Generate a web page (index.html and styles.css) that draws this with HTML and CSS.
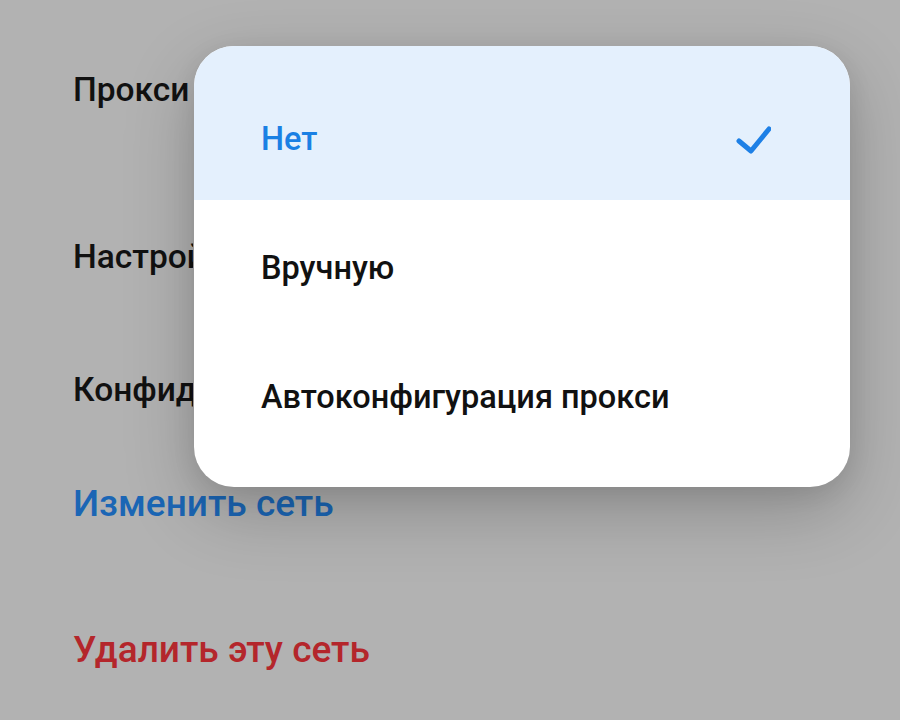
FILE: index.html
```html
<!DOCTYPE html>
<html lang="ru">
<head>
<meta charset="utf-8">
<link rel="stylesheet" href="styles.css">
</head>
<body>
<div class="screen">
  <div class="settings">
    <div class="item item-proxy">Прокси</div>
    <div class="item item-setup clipped">Настройки IP</div>
    <div class="item item-privacy clipped">Конфиденциальность</div>
    <div class="item action action-edit">Изменить сеть</div>
    <div class="item action action-delete">Удалить эту сеть</div>
  </div>
  <div class="menu">
    <div class="option option-selected">
      <span class="label">Нет</span>
      <svg class="check" width="36" height="30" viewBox="0 0 36 30"><path d="M4 17 L16 27 L34 5" fill="none" stroke="#1e80e6" stroke-width="5" stroke-linecap="round" stroke-linejoin="round"/></svg>
    </div>
    <div class="option option-mid"><span class="label">Вручную</span></div>
    <div class="option option-last"><span class="label">Автоконфигурация прокси</span></div>
  </div>
</div>
</body>
</html>
```
FILE: styles.css
```css
html, body {
  margin: 0;
  padding: 0;
}
body {
  background: #b2b2b2;
  font-family: Roboto, "Noto Sans", "Liberation Sans", sans-serif;
}
.screen {
  position: relative;
  width: 900px;
  height: 720px;
  overflow: hidden;
}
.settings {
  display: flex;
  flex-direction: column;
  align-items: flex-start;
  padding: 0 0 0 73px;
}
.item {
  font-size: 33.5px;
  font-weight: 500;
  color: #111;
  line-height: 40px;
  white-space: nowrap;
}
.clipped {
  max-width: 120px;
  overflow: hidden;
}
.item-proxy { margin-top: 70px; }
.item-setup { margin-top: 127px; }
.item-privacy { margin-top: 93px; }
.action { font-size: 37px; line-height: 44px; }
.action-edit { margin-top: 72px; color: #1b66b5; }
.action-delete { margin-top: 102px; color: #b4262b; }

.menu {
  position: absolute;
  left: 194px;
  top: 46px;
  width: 656px;
  height: 441px;
  background: #fff;
  border-radius: 40px;
  overflow: hidden;
  box-shadow: 0 24px 70px rgba(0, 0, 0, 0.22), 0 6px 24px rgba(0, 0, 0, 0.08);
  display: flex;
  flex-direction: column;
}
.option {
  display: flex;
  align-items: center;
  justify-content: space-between;
  padding: 0 79px 0 67px;
  box-sizing: border-box;
  font-size: 32.5px;
  font-weight: 500;
  color: #111;
}
.option-selected {
  height: 154px;
  padding-top: 32px;
  background: #e4f0fd;
  color: #1a80e4;
}
.option-mid { height: 136px; }
.option-last { height: 122px; }
.check { display: block; }
```
